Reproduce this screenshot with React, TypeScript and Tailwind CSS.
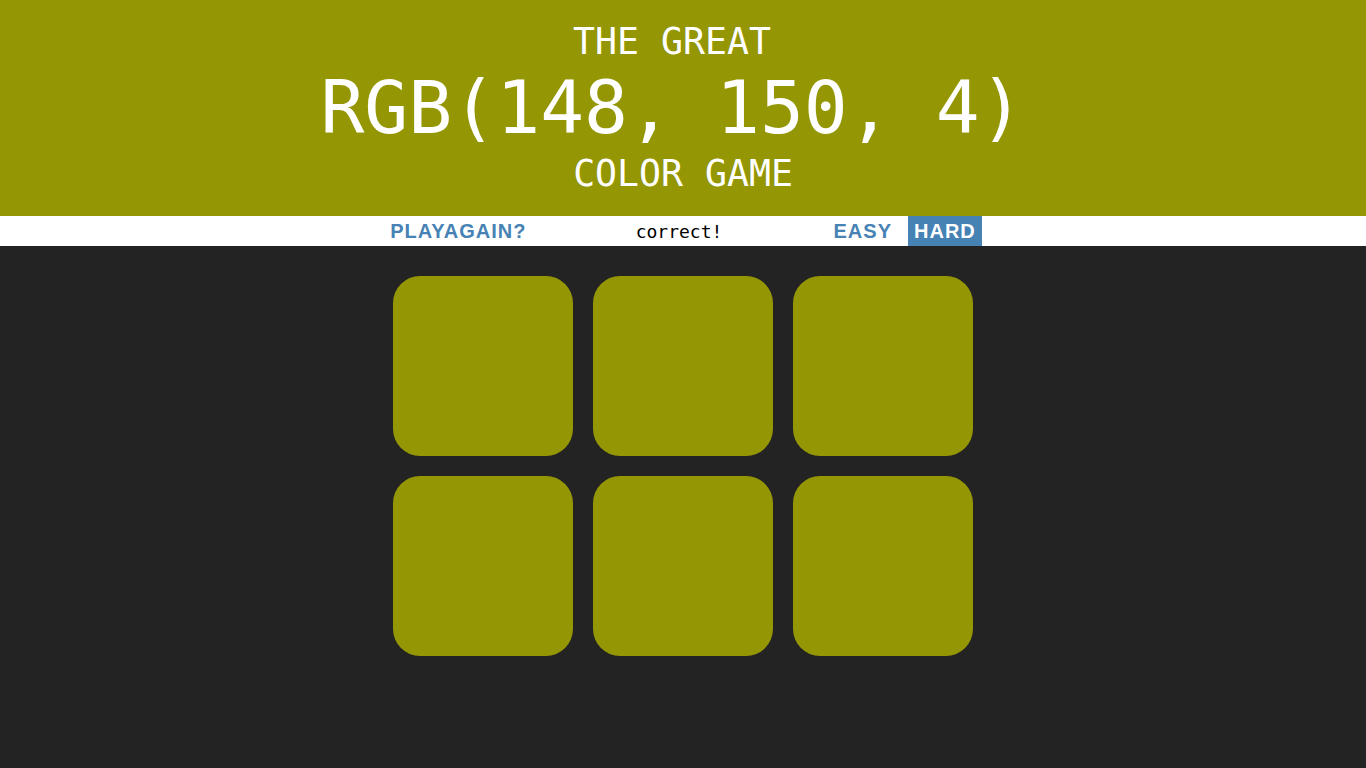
import { useState } from "react";

const target = "rgb(148, 150, 4)";

const btn =
  "h-full px-[6px] font-['Liberation_Sans',Arial,sans-serif] text-[20px] font-bold uppercase tracking-[1px]";

export default function App() {
  const [hard, setHard] = useState(true);
  const squares = Array.from({ length: hard ? 6 : 3 }, () => target);

  return (
    <div className="min-h-[768px] bg-[#232323]">
      {/* Header */}
      <h1
        className="m-0 py-5 text-center font-['DejaVu_Sans_Mono',monospace] font-normal uppercase text-white"
        style={{ backgroundColor: target }}
      >
        <div className="pr-[22px] text-[36.5px] leading-[44px]">The Great</div>
        <div className="pr-[22px] text-[73px] leading-[88px]">{target}</div>
        <div className="text-[36.5px] leading-[44px]">Color Game</div>
      </h1>

      {/* Stripe */}
      <div className="flex h-[30px] items-center justify-center gap-[10px] bg-white">
        <button className={`${btn} text-[#4682b4]`}>PlayAgain?</button>
        <span className="w-[273px] pt-[1px] text-center font-['DejaVu_Sans_Mono',monospace] text-[18px] text-black">
          correct!
        </span>
        <div className="ml-[2px] flex h-full gap-[10px]">
          <button
            onClick={() => setHard(false)}
            className={`${btn} ${hard ? "text-[#4682b4]" : "bg-[#4682b4] text-white"}`}
          >
            Easy
          </button>
          <button
            onClick={() => setHard(true)}
            className={`${btn} ${hard ? "bg-[#4682b4] text-white" : "text-[#4682b4]"}`}
          >
            Hard
          </button>
        </div>
      </div>

      {/* Squares */}
      <div className="mx-auto mt-5 flex w-[600px] flex-wrap">
        {squares.map((c, i) => (
          <div
            key={i}
            className="m-[10px] h-[180px] w-[180px] rounded-[27px]"
            style={{ backgroundColor: c }}
          />
        ))}
      </div>
    </div>
  );
}
